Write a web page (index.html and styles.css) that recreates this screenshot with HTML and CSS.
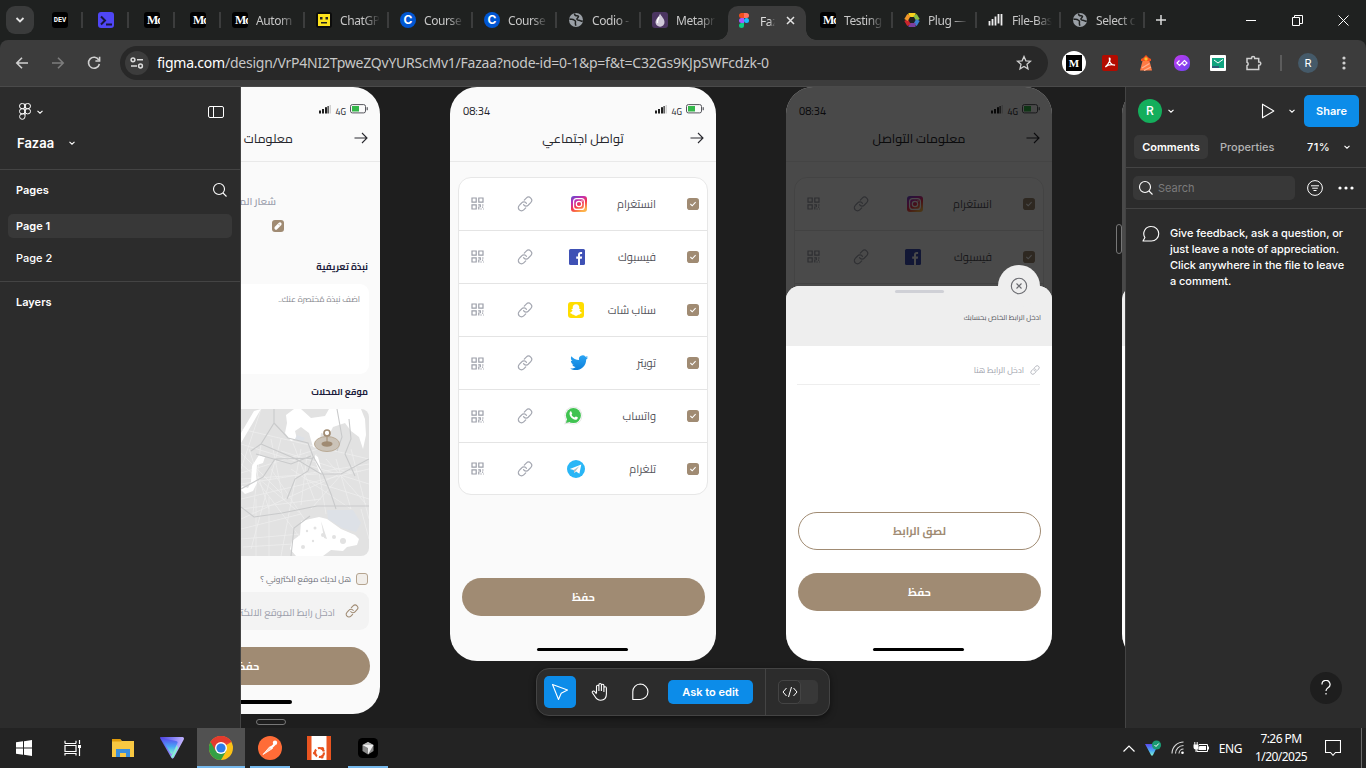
FILE: index.html
```html
<!DOCTYPE html>
<html lang="en">
<head>
<meta charset="utf-8">
<title>Fazaa</title>
<link rel="stylesheet" href="styles.css">
</head>
<body>
<svg class="defs" width="0" height="0">
  <defs>
    <linearGradient id="ig" x1="0" y1="0" x2=".6" y2="1"><stop offset="0" stop-color="#5a4bd0"/><stop offset=".35" stop-color="#c22fb0"/><stop offset=".65" stop-color="#f5364c"/><stop offset="1" stop-color="#fdb24a"/></linearGradient>
    <linearGradient id="tw" x1="0" y1="0" x2="0" y2="1"><stop offset="0" stop-color="#2aa4f4"/><stop offset="1" stop-color="#0d7fd9"/></linearGradient>
    <linearGradient id="vp" x1="0" y1="0" x2="1" y2=".3"><stop offset="0" stop-color="#4a3fd8"/><stop offset=".5" stop-color="#7f7cf5"/><stop offset="1" stop-color="#cdbcff"/></linearGradient>
    <linearGradient id="vq" x1="0" y1="0" x2="0" y2="1"><stop offset="0" stop-color="#5a48ee"/><stop offset=".55" stop-color="#4aa6f5"/><stop offset="1" stop-color="#7ff5d0"/></linearGradient>
    <linearGradient id="pu" x1="0" y1="0" x2="1" y2="1"><stop offset="0" stop-color="#c13af0"/><stop offset="1" stop-color="#6a45ee"/></linearGradient>
    <symbol id="chev" viewBox="0 0 10 10"><path d="M2.500 3.800 5 6.200l2.500-2.400" fill="none" stroke="currentColor" stroke-width="1.100"/></symbol>
    <symbol id="link" viewBox="0 0 24 24"><g fill="none" stroke="currentColor" stroke-width="1.800" stroke-linecap="round"><path d="M9.800 13a4.600 4.600 0 0 0 7.300.54l3.500-3.700a4.700 4.700 0 0 0-6.700-6.700l-3 3.100"/><path d="M14.200 11a4.600 4.600 0 0 0-7.300-.54l-3.500 3.700a4.700 4.700 0 0 0 6.700 6.700l3-3.100"/></g></symbol>
    <symbol id="qr" viewBox="0 0 13 13"><g fill="none" stroke="currentColor" stroke-width="1.200"><path d="M1 1h4.200v4.200H1zM7.800 1H12v4.200H7.800zM1 7.800h4.200V12H1z"/><path d="M7.200 7.800h2M9.300 7.300v3M11 8h1.600M7.800 9.500v3M9.400 12h1.300M11.600 9.600v1.200M12 12h.8"/></g></symbol>
    <symbol id="check" viewBox="0 0 12 12"><rect width="12" height="12" rx="2.800" fill="#a08b73"/><path d="M3.400 6 5.200 7.800l3.400-3.600" fill="none" stroke="#fff" stroke-width="1.100"/></symbol>
    <symbol id="arrow" viewBox="0 0 14 12"><path d="M.5 6h12.300M8 1l5 5-5 5" fill="none" stroke="#2a2a30" stroke-width="1.100"/></symbol>
    <symbol id="bars" viewBox="0 0 12 9"><g fill="#1e1e1e"><rect y="5.500" width="2" height="3"/><rect x="3" y="4" width="2" height="4.500"/><rect x="6" y="2.200" width="2" height="6.300"/><rect x="8.500" y="1" width="1.200" height="7.500"/></g><rect x="10.600" width="1.200" height="8.500" fill="#c9c9c9"/></symbol>
    <symbol id="batt" viewBox="0 0 18 10"><rect x=".5" y=".6" width="15" height="8.300" rx="1.800" fill="none" stroke="#55565c"/><rect x="2" y="2" width="7" height="5.500" fill="#34b84a"/><rect x="16.600" y="3.200" width="1.200" height="3" fill="#55565c"/></symbol>
    <symbol id="insta" viewBox="0 0 24 24"><rect x="4" y="4" width="16" height="16" rx="3" fill="url(#ig)"/><g fill="none" stroke="#fff" stroke-width="1.200"><rect x="6.600" y="6.600" width="10.800" height="10.800" rx="3"/><circle cx="12" cy="12" r="2.700"/></g><circle cx="15" cy="9" r=".7" fill="#fff"/></symbol>
    <symbol id="fb" viewBox="0 0 24 24"><rect x="4" y="4" width="16" height="16" rx="1.500" fill="#3f51b5"/><path d="M13 20v-6.300h-1.800v-2.200H13v-1.600c0-2 1-3 2.900-3h1.200v2.200H16c-.8 0-1 .4-1 1.100v1.300h2.100l-.3 2.200H15V20z" fill="#fff"/></symbol>
    <symbol id="snap" viewBox="0 0 24 24"><rect x="4" y="4" width="16" height="16" rx="3" fill="#fd0"/><path d="M12 6.300c2.300 0 3.300 1.600 3.300 3.300v1.300l1.500.1c-.1.900-1.100 1-1.300 1.300.4 1.300 1.300 2.100 2.500 2.500-.3 1-1.600.8-2.100 1.200-.3 1.200-1.300.4-2.100.9-.6.500-1 .9-1.800.9s-1.200-.4-1.800-.9c-.8-.5-1.800.3-2.100-.9-.5-.4-1.800-.2-2.100-1.200 1.200-.4 2.100-1.200 2.500-2.500-.2-.3-1.200-.4-1.300-1.300l1.500-.1V9.600c0-1.700 1-3.300 3.300-3.300z" fill="#fff"/></symbol>
    <symbol id="twit" viewBox="0 0 24 24"><path d="M21.200 6.200c-.7.300-1.300.5-2 .6.700-.5 1.200-1.100 1.500-1.900-.7.400-1.400.7-2.200.8a3.700 3.700 0 0 0-6.400 3.400C8.900 9 6.200 7.500 4.400 5.200c-1 1.600-.5 3.800 1.100 4.900-.6 0-1.100-.2-1.600-.4 0 1.800 1.200 3.300 2.900 3.700-.5.100-1 .2-1.600.1.500 1.400 1.800 2.500 3.400 2.500-1.500 1.200-3.500 1.800-5.400 1.500 6.500 4 16-.1 16-9.100.8-.6 1.500-1.300 2-2.200z" fill="url(#tw)"/></symbol>
    <symbol id="whats" viewBox="0 0 24 24"><circle cx="12.400" cy="11.600" r="9" fill="#e3e5e3"/><path d="M3.200 20.600 5 15.500l3.600 3.700z" fill="#e3e5e3"/><circle cx="12.400" cy="11.600" r="8.200" fill="#fff"/><circle cx="12.400" cy="11.600" r="7.500" fill="#40c351"/><path d="M5 19l1.200-4.500 3.200 3.300z" fill="#40c351"/><path d="M9.200 7.600c.8-.5 1.100-.2 1.300.3l.7 1.500c.2.500-.6 1-.7 1.300.6 1.400 1.800 2.200 3 2.700.5 0 .9-1.200 1.400-1l1.800.9c.3.200 0 1.400-.6 1.900-3.300 2.400-9.700-3.900-6.900-7.600z" fill="#fff"/></symbol>
    <symbol id="tele" viewBox="0 0 24 24"><circle cx="12" cy="12" r="9" fill="#29b6f6"/><path d="M5.800 12.100 17.300 7.500l-1.900 9.200-3.300-2.300-1.700 1.700-.6-3z" fill="#fff"/><path d="M9.700 13.100l.7 3 1.200-2 3.700-4.800z" fill="#b0bec5"/></symbol>
    <symbol id="globe" viewBox="0 0 16 16"><circle cx="8" cy="8" r="7" fill="#9aa0a6"/><path d="M1.500 7c2 .5 3.500.2 4.500 1s2 1 1.500 2.200 .2 2 .2 3.600M6.500 1.500c0 1.800 1 2.300 2.500 2.300s2 1 1 1.700-1.500 1-1 2 2.500.3 3.500 1.200 1.500.5 2-.2" fill="none" stroke="#1f2120" stroke-width="1.500"/></symbol>
    <symbol id="mag" viewBox="0 0 16 16"><circle cx="7" cy="7" r="5.500" fill="none" stroke="currentColor" stroke-width="1.100"/><path d="m11 11 3.500 3.500" stroke="currentColor" stroke-width="1.100"/></symbol>
  </defs>
</svg>

<header class="tabs">
  <div class="tabsearch"><svg width="12" height="12" viewBox="0 0 12 12"><path d="m2.500 4 3.500 3.500L9.500 4" fill="none" stroke="#e3e3e3" stroke-width="1.800"/></svg></div>
  <div class="tab slim"><i class="fav dev">DEV</i></div>
  <div class="tab slim"><i class="fav term"><svg width="16" height="16"><path d="m3 4.500 4 4-4 4M8 12.500h6" fill="none" stroke="#17163a" stroke-width="2"/></svg></i></div>
  <div class="tab slim"><i class="fav mk">Mc</i></div>
  <div class="tab slim"><i class="fav mk">Mc</i></div>
  <div class="tab"><i class="fav mk">Mc</i><span>Autom</span></div>
  <div class="tab"><i class="fav"><svg width="16" height="16"><rect width="16" height="16" fill="#0c0c0c"/><rect x="2" y="2" width="12" height="12" fill="#fce21c"/><path d="M4 5h2.500v2.500H4zM9.500 5H12v2.500H9.500zM5 10h6v1.500H5z" fill="#222"/></svg></i><span>ChatGP</span></div>
  <div class="tab"><i class="fav cr">C</i><span>Course</span></div>
  <div class="tab"><i class="fav cr">C</i><span>Course</span></div>
  <div class="tab"><i class="fav"><svg width="16" height="16"><use href="#globe"/></svg></i><span>Codio -</span></div>
  <div class="tab last"><i class="fav"><svg width="16" height="16"><rect width="16" height="16" fill="#4b3561"/><path d="M8 1.500c1 2.500 4.500 5 4.500 8.500a4.500 4.500 0 0 1-9 .5C3.500 7 7 5 8 1.500z" fill="#cfc8d8"/><path d="M7 5c-1 2-2 3.500-1.500 6" stroke="#fff" fill="none" stroke-width="1.500"/></svg></i><span>Metapr</span></div>
  <div class="tab active"><svg width="10" height="15" viewBox="0 0 10 15"><path d="M2.500 0H5v5H2.500a2.500 2.500 0 0 1 0-5z" fill="#f24e1e"/><path d="M5 0h2.500a2.500 2.500 0 0 1 0 5H5z" fill="#ff7262"/><path d="M2.500 5H5v5H2.500a2.500 2.500 0 0 1 0-5z" fill="#a259ff"/><circle cx="7.500" cy="7.500" r="2.500" fill="#1abcfe"/><path d="M2.500 10H5v2.500A2.500 2.500 0 1 1 2.500 10z" fill="#0acf83"/></svg><span>Faz</span><svg class="x" width="9" height="9"><path d="m1 1 7 7M8 1 1 8" stroke="#e3e3e3" stroke-width="1.500"/></svg></div>
  <div class="tab"><i class="fav mk">Mc</i><span>Testing</span></div>
  <div class="tab"><i class="fav"><svg width="16" height="16"><g fill="none" stroke-width="4"><path d="M4.500 3h7" stroke="#f7d21c"/><path d="M11 3l3 5" stroke="#8ac043"/><path d="M14 8l-3 5" stroke="#3d7fd0"/><path d="M11.500 13h-7" stroke="#7a3fa0"/><path d="M5 13 2 8" stroke="#c9252d"/><path d="m2 8 3-5" stroke="#f0962a"/></g></svg></i><span>Plug —</span></div>
  <div class="tab"><i class="fav"><svg width="16" height="16"><path d="M1.500 9v4.500M4.500 7v6.500M7.500 4.500v9M10.500 2v9.500M13.500 2v11.500" stroke="#eee" stroke-width="1.800"/></svg></i><span>File-Bas</span></div>
  <div class="tab"><i class="fav"><svg width="16" height="16"><use href="#globe"/></svg></i><span>Select c</span></div>
  <svg class="plus" width="12" height="12"><path d="M6 1v10M1 6h10" stroke="#dadada" stroke-width="1.500"/></svg>
  <div class="winctl">
    <svg width="11" height="11"><path d="M0 5.500h10" stroke="#fff"/></svg>
    <svg width="11" height="11"><path d="M.5 2.500h7v8h-7zM2.500 2.500v-2h8v8h-3" fill="none" stroke="#fff"/></svg>
    <svg width="11" height="11"><path d="m.5.5 10 10M10.500.5l-10 10" stroke="#fff"/></svg>
  </div>
</header>

<div class="barwrap"><nav class="bar">
  <svg class="nv" width="16" height="16"><path d="M14 8H3M8 2.800 2.800 8 8 13.200" fill="none" stroke="#d0d0d0" stroke-width="1.600"/></svg>
  <svg class="nv" width="16" height="16"><path d="M2 8h11M8 2.800 13.200 8 8 13.200" fill="none" stroke="#7d7d7d" stroke-width="1.600"/></svg>
  <svg class="nv" width="16" height="16"><path d="M12.800 5A5.500 5.500 0 1 0 13.400 9" fill="none" stroke="#d0d0d0" stroke-width="1.600"/><path d="M13.600 1.800V6H9.400" fill="none" stroke="#d0d0d0" stroke-width="1.600"/></svg>
  <div class="omni">
    <i class="site"><svg width="14" height="12" viewBox="0 0 14 12"><g fill="none" stroke="#dcdcdc" stroke-width="1.500"><circle cx="3" cy="2.800" r="1.900"/><path d="M7 2.800h6M1 9h6"/><circle cx="10.500" cy="9" r="1.900"/></g></svg></i>
    <div class="url"><b>figma.com</b>/design/VrP4NI2TpweZQvYURScMv1/Fazaa?node-id=0-1&amp;p=f&amp;t=C32Gs9KJpSWFcdzk-0</div>
    <svg width="16" height="16"><path d="m8 1.500 1.900 4.300 4.600.4-3.500 3.100 1 4.600L8 11.500l-4 2.400 1-4.600L1.500 6.200l4.600-.4z" fill="none" stroke="#d0d0d0" stroke-width="1.300"/></svg>
  </div>
  <div class="ext">
    <i class="med">M</i>
    <svg width="16" height="16"><rect width="16" height="16" rx="2" fill="#b30b00"/><path d="M7.300 3c2 0 .3 5-4 9 2.500-2.200 6-2.800 9.700-1.800-3 .3-6.200-3-5.700-7.200z" fill="none" stroke="#fff" stroke-width="1.200"/></svg>
    <svg width="16" height="16"><path d="M3 6V4l2-1 3-3 3 3 2 1v2z" fill="#f4511e"/><path d="M4.500 6h7l2.500 9.500H2z" fill="#ff7a45"/><circle cx="8" cy="4" r="1.700" fill="#ffc02e"/><path d="m4 13 7.500-4.500M6 15.500l7-3.500" stroke="#ffb190" stroke-width="1.300"/></svg>
    <svg width="16" height="16"><rect width="16" height="16" rx="7" fill="url(#pu)"/><path d="M5.500 5.500 3 8l2.500 2.500L10.500 5.500 13 8l-2.500 2.500L8.500 8.500" fill="none" stroke="#fff" stroke-width="1.200"/></svg>
    <svg width="16" height="16"><rect width="16" height="16" rx="1" fill="#fff"/><rect x="2" y="3" width="12" height="10" fill="#10a37f"/><path d="m4 5 4 3 5-3.500" fill="none" stroke="#fff"/><path d="M2 11h7v2H2z" fill="#2d5b77"/></svg>
    <svg width="18" height="18"><path d="M2 4.500h4.500V4a1.600 1.600 0 0 1 3.200 0v.5h4V8h.5a1.600 1.600 0 0 1 0 3.200h-.5v4.300H2v-3.800a1.800 1.800 0 0 0 0-3.400z" fill="none" stroke="#d0d0d0" stroke-width="1.500"/></svg>
    <i class="vsep"></i>
    <i class="me">R</i>
    <svg width="4" height="16"><g fill="#d0d0d0"><circle cx="2" cy="3" r="1.600"/><circle cx="2" cy="8" r="1.600"/><circle cx="2" cy="13" r="1.600"/></g></svg>
  </div>
</nav></div>

<main>
  <aside class="left">
    <div class="ltop">
      <svg class="flogo" width="12" height="17" viewBox="0 0 12 17"><g fill="none" stroke="#fff"><rect x=".5" y=".5" width="5.500" height="5.200" rx="2.600"/><rect x="6" y=".5" width="5.500" height="5.200" rx="2.600"/><rect x=".5" y="5.700" width="5.500" height="5.200" rx="2.600"/><rect x="6" y="5.700" width="5.500" height="5.200" rx="2.600"/><path d="M6 10.900v2.700a2.700 2.700 0 1 1-2.700-2.700zM6 .5v11"/></g></svg>
      <svg class="cv" width="10" height="10"><use href="#chev"/></svg>
      <svg class="panel" width="16" height="12"><rect x=".5" y=".5" width="15" height="11" rx="1.500" fill="none" stroke="#fff"/><path d="M5.500 0v12" stroke="#fff"/></svg>
    </div>
    <div class="fname">Fazaa <svg width="10" height="10"><use href="#chev"/></svg></div>
    <section class="pages">
      <div class="ph">Pages <svg width="16" height="16"><use href="#mag"/></svg></div>
      <div class="pg on">Page 1</div>
      <div class="pg">Page 2</div>
    </section>
    <div class="ph layers">Layers</div>
  </aside>

  <div class="canvas">
    <article class="phone p1">
      <div class="status"><span class="time"></span><svg width="12" height="9"><use href="#bars"/></svg><small>4G</small><svg width="18" height="10"><use href="#batt"/></svg></div>
      <div class="head"><h2 dir="rtl">معلومات المتجر</h2><svg width="14" height="12"><use href="#arrow"/></svg></div>
      <div class="form" dir="rtl">
        <p class="logo">شعار المتجر</p>
        <svg class="pen" width="12" height="12"><rect width="12" height="12" rx="3" fill="#a08b73"/><path d="m4 8 4-4" stroke="#fff" stroke-width="3.200" stroke-linecap="round"/><path d="m6.500 4 1.600 1.600" stroke="#a08b73" stroke-width=".6"/></svg>
        <h3 class="a">نبذة تعريفية</h3>
        <div class="area">اضف نبذة مُختصرة عنك..</div>
        <h3 class="b">موقع المحلات</h3>
        <svg class="map" width="250" height="147" viewBox="-122 0 250 147">
          <rect x="-122" width="250" height="147" fill="#e2e2e2"/>
          <g stroke="#eeeeee" stroke-width=".8" fill="none"><path d="M0 20l128 30M0 35l128 40M0 55l60 50M0 75l128-20M0 90l128-30M0 110l110-50M20 0l-20 60M40 30l-30 110M60 40L40 147M75 45l10 60M95 50l15 50M110 40l18 70M0 100l80-10M0 120l60-15M0 130l60-5M15 70l45 60M30 60l40 60M50 60l60 40M85 50l40 45M15 90v57M28 88v59M120 100l8 30"/><path d="M0 64l90-28M0 70l120-8M40 42l70 22M30 30l12 60M52 34l22 58M66 46l-6 50M100 66l-30 34M2 138l50-3M8 40l20 60M20 34l-8 70M64 70l64 20M0 44l40 40"/></g>
          <path d="M0 24 13 2 20 0 7 22 0 34zM45 6l8-6h7l10 9 14-2 4-7h32l4 10 1 16-3 14-4-12-8-6-6-8-12 4-4 8-8-2-2 16-6-2-4-14-8-6-6 4 2 8-6 2-6-8 2-10zM18 46l6 2-2 6-6 2-1 12 1 6-4 8-8 3-4-4 1-4 6 2 3-6 1-16zM74 46l3 2 4 15-2 1-5-12zM60 112l18-4 8 2 14 10 14 6 4 4-2 6-10 2-4 4-12-1-8 6H55l-6-7 2-8 8-6z" fill="#fff"/>
          <path d="m56 26 8 3-3 4-7-3zM86 101h26l8 13-5 9-14-4-14-9z" fill="#dde1e7"/>
          <g fill="none" stroke="#c9cacb" stroke-width="1.100"><path d="M33 0v14L20 35l-10 7M33 14l14 15 20 5 5 13 10 18 8 20 5 15M0 98l13 10 28-4 35-7h52M20 35l35 15 25 15h20l28-15M0 80l22-12 12-18 38-1M72 48l-5 14-13 8-8 20M108 10l2 20-6 15 10 22M96 0l5 28-5 14M15 45l35 10 20-8M50 147l3-28 16-12"/></g>
          <g fill="#e2e2e2"><circle cx="66" cy="122" r="1.200"/><circle cx="74" cy="119" r="1.500"/><circle cx="82" cy="126" r="2"/><circle cx="93" cy="128" r="2"/><circle cx="102" cy="132" r="3"/><circle cx="72" cy="132" r="1.200"/><circle cx="62" cy="138" r="2"/><path d="m80 112 6 18-3-1z"/></g>
          <ellipse cx="86" cy="35" rx="12.500" ry="7.500" fill="#cbc3b8" stroke="#b9a994"/><ellipse cx="86" cy="35" rx="5.500" ry="2.700" fill="#a08b73"/><path d="M86 28v7" stroke="#a08b73" stroke-width="1"/><circle cx="86" cy="24" r="3" fill="#fff" stroke="#a08b73" stroke-width="1.700"/>
        </svg>
        <div class="ask"><i></i><span>هل لديك موقع الكتروني ؟</span></div>
        <div class="site-in"><svg width="14" height="14"><use href="#link"/></svg><span>ادخل رابط الموقع الالكتروني</span></div>
        <div class="save"><span>حفظ</span></div>
        <div class="home"></div>
      </div>
    </article>

    <article class="phone p2">
      <div class="status"><span class="time">08:34</span><svg width="12" height="9"><use href="#bars"/></svg><small>4G</small><svg width="18" height="10"><use href="#batt"/></svg></div>
      <div class="head"><h2 dir="rtl">تواصل اجتماعي</h2><svg width="14" height="12"><use href="#arrow"/></svg></div>
      <div class="list">
        <div class="row"><svg class="q"><use href="#qr"/></svg><svg class="l"><use href="#link"/></svg><svg class="br"><use href="#insta"/></svg><span>انستغرام</span><svg class="c"><use href="#check"/></svg></div>
        <div class="row fbk"><svg class="q"><use href="#qr"/></svg><svg class="l"><use href="#link"/></svg><svg class="br"><use href="#fb"/></svg><span>فيسبوك</span><svg class="c"><use href="#check"/></svg></div>
        <div class="row snp"><svg class="q"><use href="#qr"/></svg><svg class="l"><use href="#link"/></svg><svg class="br"><use href="#snap"/></svg><span>سناب شات</span><svg class="c"><use href="#check"/></svg></div>
        <div class="row"><svg class="q"><use href="#qr"/></svg><svg class="l"><use href="#link"/></svg><svg class="br"><use href="#twit"/></svg><span>تويتر</span><svg class="c"><use href="#check"/></svg></div>
        <div class="row wts"><svg class="q"><use href="#qr"/></svg><svg class="l"><use href="#link"/></svg><svg class="br"><use href="#whats"/></svg><span>واتساب</span><svg class="c"><use href="#check"/></svg></div>
        <div class="row snp"><svg class="q"><use href="#qr"/></svg><svg class="l"><use href="#link"/></svg><svg class="br"><use href="#tele"/></svg><span>تلغرام</span><svg class="c"><use href="#check"/></svg></div>
      </div>
      <div class="foot"><div class="save"><span>حفظ</span></div><div class="home"></div></div>
    </article>

    <article class="phone p3">
      <div class="status"><span class="time">08:34</span><svg width="12" height="9"><use href="#bars"/></svg><small>4G</small><svg width="18" height="10"><use href="#batt"/></svg></div>
      <div class="head"><h2 dir="rtl">معلومات التواصل</h2><svg width="14" height="12"><use href="#arrow"/></svg></div>
      <div class="list">
        <div class="row"><svg class="q"><use href="#qr"/></svg><svg class="l"><use href="#link"/></svg><svg class="br"><use href="#insta"/></svg><span>انستغرام</span><svg class="c"><use href="#check"/></svg></div>
        <div class="row fbk"><svg class="q"><use href="#qr"/></svg><svg class="l"><use href="#link"/></svg><svg class="br"><use href="#fb"/></svg><span>فيسبوك</span><svg class="c"><use href="#check"/></svg></div>
        <div class="row"></div>
      </div>
      <div class="shade"></div>
      <div class="sheet">
        <div class="bump"><svg width="18" height="18"><circle cx="9" cy="9" r="7.700" fill="none" stroke="#6a6b70" stroke-width="1.100"/><path d="m6.500 6.500 5 5M11.500 6.500l-5 5" stroke="#6a6b70" stroke-width="1.100"/></svg></div>
        <div class="shead"><i></i><p dir="rtl">ادخل الرابط الخاص بحسابك</p></div>
        <div class="sin" dir="rtl"><svg width="10" height="10"><use href="#link"/></svg><span>ادخل الرابط هنا</span></div>
        <div class="foot"><div class="save ghost"><span>لصق الرابط</span></div><div class="save"><span>حفظ</span></div><div class="home"></div></div>
      </div>
    </article>

    <article class="phone p4"><div class="shade"></div><div class="sheet"><div class="shead"></div></div></article>
    <i class="vscroll"></i><i class="hscroll"></i>

    <div class="tools">
      <i class="tool on"><svg width="18" height="18"><path d="M1.500 1.500 16.500 7l-6.300 3.200L7.500 16.500z" fill="none" stroke="#fff" stroke-width="1.100" stroke-linejoin="round"/></svg></i>
      <i class="tool"><svg width="20" height="20" viewBox="0 0 20 20"><path d="M6.500 11V4.500a1.200 1.200 0 0 1 2.400 0V9M8.900 9V2.800a1.200 1.200 0 0 1 2.500 0V9M11.400 9V3.500a1.200 1.200 0 0 1 2.500 0V10M13.900 10V6a1.200 1.200 0 0 1 2.500 0v6c0 4-2.500 6.200-5.700 6.200-3.200 0-4.500-1.500-5.700-3.700L2.400 10.700c-.7-1.300 1.300-2.400 2.300-1.200L6.500 12" fill="none" stroke="#fff" stroke-width="1.100"/></svg></i>
      <i class="tool"><svg width="18" height="18"><path d="M9.200 1a7.600 7.600 0 1 1 0 15.500H1.800V8.700A7.500 7.500 0 0 1 9.200 1z" fill="none" stroke="#fff" stroke-width="1.100" stroke-linejoin="round"/></svg></i>
      <b class="ask-edit">Ask to edit</b>
      <div class="dev"><div class="switch"><i><svg width="16" height="12"><path d="M4.500 2 1 6l3.500 4M11.500 2 15 6l-3.500 4M9.500 1l-3 10" fill="none" stroke="#fff"/></svg></i></div></div>
    </div>
  </div>

  <aside class="right">
    <div class="rtop"><i class="av">R</i><svg width="10" height="10"><use href="#chev"/></svg><svg class="play" width="14" height="16"><path d="M1.500 1.200v13.600L12.800 8z" fill="none" stroke="#fff" stroke-width="1.100" stroke-linejoin="round"/></svg><svg width="10" height="10"><use href="#chev"/></svg><b>Share</b></div>
    <div class="rtabs"><b>Comments</b><span>Properties</span><em>71%</em><svg width="10" height="10"><use href="#chev"/></svg></div>
    <div class="rsearch"><div class="sbox"><svg width="16" height="16"><use href="#mag"/></svg>Search</div><svg class="filt" width="16" height="16" viewBox="0 0 16 16"><g fill="none" stroke="#fff" stroke-width="1"><circle cx="8" cy="8" r="7.400"/><path d="M4 5.800h8M5.200 8.200h5.600M6.500 10.500h3"/></g></svg><svg width="16" height="4"><g fill="#fff"><circle cx="2" cy="2" r="1.600"/><circle cx="8" cy="2" r="1.600"/><circle cx="14" cy="2" r="1.600"/></g></svg></div>
    <div class="note"><svg width="18" height="18"><path d="M9.500 1.500a7 7 0 1 1 0 14.500H1l1.900-3.500A7.200 7.200 0 0 1 9.500 1.500z" fill="none" stroke="#fff" stroke-width="1.100" stroke-linejoin="round"/></svg><p>Give feedback, ask a question, or<br>just leave a note of appreciation.<br>Click anywhere in the file to leave<br>a comment.</p></div>
    <i class="help"><svg width="10" height="16"><path d="M1 4.500a4 4 0 1 1 6 3.300C5.500 8.800 5 9.300 5 11M5 13v1.500" fill="none" stroke="#fff" stroke-width="1.200"/></svg></i>
  </aside>
</main>

<footer class="task">
  <i><svg width="16" height="16"><path d="M0 2.300 7 1.300v6.300H0zM8 1.200 16 0v7.600H8zM0 8.500h7v6.300l-7-1zM8 8.500h8V16l-8-1.200z" fill="#fff"/></svg></i>
  <i><svg width="17" height="16"><path d="M1 3.500V.8M12 3.500V.8M1 3.500h11M1 5.500h11v6H1zM1 13.500h11M1 13v2.500M12 13v2.500M15.500 0v4M15.500 8v8" fill="none" stroke="#fff" stroke-width="1.200"/><path d="M14 5h3v3h-3z" fill="#fff"/></svg></i>
  <i class="ex"><svg width="22" height="18"><path d="M0 0h8l2 2h12v16H0z" fill="#f8c842"/><path d="M0 0h8l1.500 2.500H0z" fill="#e09b0a"/><path d="M4 18v-8h14v8h-4v-4H8v4z" fill="#3a8edb"/></svg></i>
  <i><svg width="24" height="22"><path d="M0 0h21c3 0 3.500 1 2.500 3L14 20.500c-1 1.500-2 1.500-2.800 0L.5 2z" fill="url(#vp)"/><path d="M.3 1 16 4c2 .5 2 1.500 1 3l-4.500 9c-.5 1-1 1-1.500.5z" fill="url(#vq)"/><path d="m11 20 6-12 1 3-5 10z" fill="#82f5d3"/></svg></i>
  <i class="cur run"><svg width="24" height="24" viewBox="0 0 24 24"><circle cx="12" cy="12" r="12" fill="#fbc116"/><path d="M12 12 1.600 6A12 12 0 0 1 22.400 6z" fill="#ea4335"/><path d="M1.600 6A12 12 0 0 0 12 24l5.200-9z" fill="#34a044"/><path d="M12 6h10.400A12 12 0 0 0 1.600 6l5.200 9z" fill="#e33b2e"/><circle cx="12" cy="12" r="6" fill="#fff"/><circle cx="12" cy="12" r="4.600" fill="#2f7de9"/></svg></i>
  <i class="run"><svg width="24" height="24"><circle cx="12" cy="12" r="12" fill="#ff6c37"/><path d="m5 18.500 7-8 2.500 2z" fill="#ffd9c9" stroke="#fff" stroke-width=".8"/><path d="m11.500 11.500 4.500-4 1.500 1.500-4 4z" fill="#fff"/><circle cx="17" cy="6.800" r="2.200" fill="#fff"/></svg></i>
  <i><svg width="24" height="24"><path d="M0 0h24v24H0z" fill="#e95420"/><path d="M4.500 0h15v24h-15z" fill="#fff"/><circle cx="12.500" cy="16.500" r="4.500" fill="none" stroke="#e95420" stroke-width="2.200" stroke-dasharray="7.500 2"/><g fill="#e95420"><circle cx="7.500" cy="17" r="1.600"/><circle cx="15.500" cy="12.500" r="1.600"/><circle cx="15" cy="21" r="1.600"/></g></svg></i>
  <i class="run"><svg width="20" height="20"><rect width="20" height="20" rx="4.500" fill="#000"/><path d="m10 4 5.500 3v6L10 16.500 4.500 13V7z" fill="#888"/><path d="M4.500 7H15.500L10 16.500V10z" fill="#eee"/><path d="M4.500 7 10 4l5.500 3z" fill="#bbb"/></svg></i>
  <div class="tray">
    <svg width="12" height="7"><path d="M.5 6.500 6 1l5.500 5.500" fill="none" stroke="#fff" stroke-width="1.200"/></svg>
    <svg class="shield" width="17" height="17"><path d="M0 4h11c2 0 2 1 1.500 2L8 15c-.5 1-1.500 1-2 0z" fill="url(#vq)"/><circle cx="11.500" cy="5" r="4.600" fill="#1b9a74"/><path d="m9.500 5 1.500 1.500 2.800-3" fill="none" stroke="#fff"/></svg>
    <svg class="wifi" width="14" height="14"><g fill="none" stroke="#ddd" stroke-width="1.100"><path d="M1 12.500A11.500 11.500 0 0 1 12.500 1M4.500 12.500a8 8 0 0 1 8-8M8 12.500A4.500 4.500 0 0 1 12.500 8"/></g><circle cx="11.500" cy="11.700" r="1.300" fill="#fff"/></svg>
    <svg width="16" height="12"><path d="M6 2.500h8.500v7H4V7" fill="none" stroke="#fff"/><path d="M6.500 4H13v4H5.500V6zM15 4.500h1v3h-1zM.5 2.500H5.500V5a2.500 2.500 0 0 1-5 0z" fill="#fff"/><path d="M1.800 0v3M4.200 0v3M3 6v4" stroke="#fff"/></svg>
    <span class="eng">ENG</span>
    <div class="clock">7:26 PM<br>1/20/2025</div>
    <svg width="16" height="16"><path d="M.5.500h15v12h-5L8 15.300 5.500 12.500h-5z" fill="none" stroke="#fff" stroke-width="1.100"/></svg>
  </div>
</footer>
</body>
</html>
```
FILE: styles.css
```css
* { box-sizing: border-box; margin: 0; padding: 0; }
body { width: 1366px; height: 768px; overflow: hidden; background: #1e1e1e; display: flex; flex-direction: column; font-family: Inter, sans-serif; font-size: 11px; color: #fff; }
i, em { font-style: normal; }
svg { display: block; flex: none; }
.defs { position: absolute; }

/* browser tabs */
.tabs { height: 40px; background: #1f2120; display: flex; align-items: center; font: 12px "Noto Sans", sans-serif; color: #c7c7c7; }
.tabsearch { width: 28px; height: 28px; margin: 0 3px 0 6px; border-radius: 9px; background: #3a3b3b; display: grid; place-items: center; }
.tab { width: 84px; height: 16px; padding-left: 11px; border-right: 2px solid #3c3d3d; display: flex; align-items: center; gap: 8px; flex: none; }
.tab span { width: 40px; overflow: hidden; white-space: nowrap; letter-spacing: -.4px; line-height: 18px; padding-top: 2px; -webkit-mask-image: linear-gradient(90deg, #000 60%, transparent); mask-image: linear-gradient(90deg, #000 60%, transparent); }
.tab.slim { width: 46px; padding-left: 15px; }
.tab.last { border-color: transparent; }
.fav { width: 16px; height: 16px; border-radius: 3px; overflow: hidden; flex: none; display: grid; place-items: center; line-height: 16px; }
.fav.dev { background: #000; color: #fff; font: bold 7px/16px "Liberation Mono", monospace; }
.fav.term { background: #4f46f5; }
.fav.mk { background: #000; color: #fff; font: bold 12px/16px "Liberation Serif", serif; letter-spacing: -1px; place-items: center start; padding-left: 3px; }
.fav.cr { background: #0056d2; border-radius: 50%; color: #fff; font: bold 12px/16px Inter, sans-serif; }
.tab.active { position: relative; width: 78px; height: 34px; align-self: flex-end; background: #3c3c3c; border: 0; border-radius: 10px 10px 0 0; margin: 0 3px; color: #dedede; gap: 11px; }
.tab.active::before, .tab.active::after { content: ""; position: absolute; bottom: 0; width: 10px; height: 10px; }
.tab.active::before { left: -10px; background: radial-gradient(circle at 0 0, transparent 9.500px, #3c3c3c 10px); }
.tab.active::after { right: -10px; background: radial-gradient(circle at 100% 0, transparent 9.500px, #3c3c3c 10px); }
.tab.active svg, .tab.active span { margin-top: -5px; }
.tab.active span { width: 15px; }
.plus { margin-left: 10px; }
.winctl { margin-left: auto; display: flex; gap: 35px; padding-right: 17px; }

/* address bar */
.barwrap { background: #1f2120; height: 47px; flex: none; }
.bar { height: 47px; background: #3c3c3c; border-bottom: 1px solid #4a4a4a; border-radius: 8px 8px 0 0; display: flex; align-items: center; padding: 0 4px 0 14px; }
.nv { margin-right: 20px; }
.omni { margin-left: -2px; width: 928px; height: 34px; border-radius: 17px; background: #282828; display: flex; align-items: center; padding: 0 16px 0 5px; flex: none; }
.site { width: 24px; height: 24px; border-radius: 50%; background: #3c3c3c; display: grid; place-items: center; }
.url { flex: 1; margin: -1px 0 0 8px; font: 14px "Noto Sans", sans-serif; color: #c7c7c7; letter-spacing: -.235px; white-space: nowrap; }
.url b { font-weight: 400; color: #fff; }
.ext { margin-left: 8px; display: grid; grid-template-columns: repeat(6, 36px) 18px 36px 36px; align-items: center; justify-items: center; }
.med { width: 24px; height: 24px; border-radius: 50%; background: linear-gradient(#000, #000) center / 16px 16px no-repeat #fff; font: bold 11px/24px "Liberation Serif", serif; text-align: center; }
.vsep { width: 2px; height: 16px; background: #5c5c5c; }
.me { width: 20px; height: 20px; border-radius: 50%; background: #455a69; text-align: center; line-height: 20px; }

/* editor */
main { flex: 1; display: flex; min-height: 0; }
.left { width: 241px; background: #2c2c2c; border-right: 1px solid #444; font-weight: 600; }
.ltop { display: flex; align-items: center; padding: 16px 16px 0 19px; height: 33px; }
.cv { margin-left: 4px; }
.panel { margin-left: auto; }
.fname { height: 50px; border-bottom: 1px solid #444; padding: 15px 0 0 17px; font-size: 13px; display: flex; line-height: 17px; gap: 13px; }
.fname svg { margin-top: 3px; }
.pages { border-bottom: 1px solid #444; padding: 4px 8px 11px; height: 112px; }
.ph { height: 32px; line-height: 33px; padding: 0 4px 0 8px; display: flex; justify-content: space-between; align-items: center; }
.pg { height: 24px; line-height: 24px; padding-left: 8px; border-radius: 5px; font-weight: 500; margin-bottom: 8px; }
.pg.on { background: #383838; margin-top: 8px; font-weight: 600; }
.layers { padding-left: 16px; margin-top: 4px; }

.canvas { flex: 1; position: relative; overflow: hidden; background: #1e1e1e; }
.phone { position: absolute; top: 0; width: 266px; height: 574px; border-radius: 27px; background: #fafafa; overflow: hidden; color: #26262c; display: flex; flex-direction: column; font-family: Cairo, "Noto Sans Arabic", "DejaVu Sans", sans-serif; }
.p1 { left: -127px; height: 627px; }
.p2 { left: 209px; }
.p3 { left: 545px; }
.p4 { left: 881px; }
.status { height: 41px; padding: 6px 12px 0 13px; display: flex; align-items: center; flex: none; }
.time { flex: 1; font-size: 11px; line-height: 14px; padding-top: 1px; }
.status small { font-size: 9px; line-height: 10px; margin: 2px 4px 0; }
.status svg { margin-top: -3px; }
.head { height: 34px; border-bottom: 1px solid #e9e9e9; padding: 4px 12px 0; display: grid; grid-template-columns: 14px 1fr 14px; flex: none; }
.head h2 { grid-column: 2; font-weight: 400; font-size: 12.700px; text-align: center; line-height: 13px; white-space: nowrap; }
.list { margin: 14.500px 8px 0; border: 1.500px solid #e7e7e7; border-radius: 13px; background: #fff; flex: none; }
.row { height: 53.200px; border-bottom: 1.500px solid #e4e4e4; display: grid; grid-template-columns: 46px 16px 34px 24px 1fr 31px 11px; align-items: center; padding: 0 9px 0 12px; color: #55555c; }
.row:last-child { border-bottom: 0; height: 51px; }
.q { width: 13px; height: 13px; color: #9b9ea8; }
.l { width: 16px; height: 16px; color: #a4a7b1; }
.br { grid-column: 4; width: 24px; height: 24px; }
.fbk .br { margin-left: -2px; }
.snp .br { margin-left: -3px; }
.wts .br { margin-left: -6px; }
.row span { grid-column: 5; text-align: right; direction: rtl; font-size: 11.100px; white-space: nowrap; }
.c { grid-column: 7; width: 12px; height: 12px; }
.foot { margin-top: auto; padding: 0 11px 10px 12px; }
.save { height: 38px; border-radius: 19px; background: #a08b73; color: #fff; font-weight: 700; font-size: 11px; display: grid; place-items: center; }
.home { width: 91px; height: 3.500px; border-radius: 2px; background: #000; margin: 31.500px auto 0; transform: translateX(-1px); }

.p1 .head h2 { direction: rtl; text-align: right; padding-right: 61px; }
.form { display: flex; flex-direction: column; align-items: flex-start; padding: 0 11px 0 10px; }
.logo { color: #9a9eac; font-size: 10.300px; font-weight: 600; line-height: 16px; margin: 32px 93px 0 0; }
.pen { margin: 10px 85px 0 0; }
.form h3 { font-size: 9.300px; line-height: 14px; color: #1b1b3a; margin-right: 1px; }
.form h3.a { margin-top: 28px; }
.form h3.b { margin-top: 11px; font-size: 9px; }
.area { width: 244px; height: 90px; margin-top: 10px; background: #fff; border-radius: 9px; padding: 9px 9px; font-size: 8.300px; color: #84858c; line-height: 12px; }
.map { margin-top: 10px; border-radius: 8px; }
.ask { margin: 17px 1px 0 0; display: flex; align-items: center; gap: 5px; font-size: 8.500px; color: #6c6e78; height: 12px; }
.ask i { width: 12px; height: 12px; border: 1px solid #b5a48f; border-radius: 3px; background: #f1eeea; }
.site-in { width: 244px; height: 38px; margin-top: 7px; background: #f3f3f3; border-radius: 9px; display: flex; align-items: center; gap: 10px; padding: 0 10px 0 0; color: #9b9daa; font-size: 10px; white-space: nowrap; }
.site-in span { padding-top: 3px; }
.site-in svg { color: #a08b73; }
.form .save { width: 244px; margin: 17px -1px 0 0; }
.form .home { margin: 15px 77px 0 0; transform: none; }

.shade { position: absolute; inset: 0; background: rgba(0, 0, 0, .71); }
.sheet { position: absolute; left: 0; right: 0; top: 199px; bottom: 0; background: #fff; border-radius: 14px 14px 0 0; display: flex; flex-direction: column; }
.bump { position: absolute; right: 12px; top: -21px; width: 42px; height: 42px; border-radius: 50%; background: #eee; display: grid; place-items: center; }
.shead { height: 60px; background: #eee; border-radius: 14px 14px 0 0; flex: none; padding: 4px 11px; }
.shead i { display: block; width: 49px; height: 3px; border-radius: 2px; background: #cfd0d6; margin: 0 auto; }
.shead p { margin-top: 19px; font-size: 7.300px; line-height: 10px; color: #55565e; }
.sin { margin: 0 12px 0 11px; height: 39px; padding-top: 10px; border-bottom: 1px solid #eee; display: flex; align-items: center; gap: 6px; color: #a0a2ac; font-size: 8.400px; }
.ghost { background: #fff; border: 1px solid #a08b73; color: #a08b73; margin-bottom: 23px; }
.sheet .home { margin-top: 37px; }
.vscroll { position: absolute; left: 875px; top: 137px; width: 6px; height: 30px; border: 1px solid #777; border-radius: 3px; background: #1e1e1e; }
.hscroll { position: absolute; left: 15px; top: 632px; width: 30px; height: 6px; border: 1px solid #777; border-radius: 3px; }

.tools { position: absolute; left: 295px; top: 581px; width: 294px; height: 48px; background: #2c2c2c; border: 1px solid #444; border-radius: 13px; display: flex; align-items: center; padding-left: 7px; box-shadow: 0 2px 6px rgba(0, 0, 0, .5); }
.tool { width: 32px; height: 32px; margin-right: 8px; display: grid; place-items: center; border-radius: 5px; }
.tool.on { background: #0c8ce9; }
.ask-edit { width: 85px; height: 24px; margin-left: 4px; border-radius: 5px; background: #0c8ce9; text-align: center; line-height: 24px; font-weight: 600; }
.tools .dev { margin-left: 12px; border-left: 1px solid #444; height: 46px; padding: 11px 0 0 12px; }
.switch { width: 40px; height: 24px; border-radius: 5px; background: #383838; }
.switch i { width: 23px; height: 24px; border: 1px solid #444; border-radius: 5px; background: #2c2c2c; display: grid; place-items: center; }

.right { width: 241px; background: #2c2c2c; border-left: 1px solid #444; position: relative; }
.rtop { height: 48px; display: flex; align-items: center; padding: 0 7px 0 12px; }
.av { width: 24px; height: 24px; border-radius: 50%; background: #14ae5c; text-align: center; line-height: 24px; margin-right: 4px; font-size: 12px; font-weight: 500; }
.play { margin: 0 12px 0 auto; }
.rtop b { width: 55px; height: 32px; margin-left: 7px; border-radius: 5px; background: #0c8ce9; text-align: center; line-height: 32px; font-weight: 600; }
.rtabs { height: 33px; border-bottom: 1px solid #444; display: flex; align-items: center; padding: 0 14px 9px 8px; }
.rtabs b { width: 74px; height: 24px; border-radius: 5px; background: #383838; text-align: center; line-height: 24px; font-weight: 600; }
.rtabs span { color: #b3b3b3; font-weight: 500; margin-left: 12px; }
.rtabs em { margin: 0 12px 0 auto; font-weight: 500; letter-spacing: .4px; }
.rsearch { height: 41px; border-bottom: 1px solid #444; display: flex; align-items: center; padding: 0 12px 0 7px; }
.sbox { width: 162px; height: 24px; border-radius: 5px; background: #383838; color: #7b7b7b; display: flex; align-items: center; gap: 4px; padding-left: 5px; }
.sbox svg { color: #fff; }
.filt { margin: 0 15px 0 12px; }
.note { display: flex; gap: 10px; padding: 16px 0 0 16px; line-height: 16px; font-weight: 500; letter-spacing: -.06px; }
.help { position: absolute; right: 24px; bottom: 24px; width: 32px; height: 32px; border-radius: 50%; background: #1e1e1e; display: grid; place-items: center; }

/* taskbar */
.task { height: 40px; background: #232323; display: flex; flex: none; font: 12px "Noto Sans", sans-serif; }
.task > i { width: 48px; display: grid; place-items: center; margin-right: 1px; position: relative; }
.task > i:first-child { margin-right: 0; }
.task .ex { margin-left: 2px; }
.cur { background: #515151; }
.run::after { content: ""; position: absolute; left: 4px; right: 4px; bottom: 0; height: 2px; background: #76b9ed; }
.cur.run::after { left: 0; right: 0; }
.tray { margin-left: auto; display: flex; align-items: center; padding-right: 20px; border-right: 1px solid #6b6b6b; margin-right: 4px; gap: 10px; }
.shield { margin-right: -1px; }
.wifi { margin-right: -2px; }
.eng { letter-spacing: -.4px; margin-right: 3px; }
.clock { width: 56px; text-align: center; line-height: 18px; letter-spacing: -.55px; white-space: nowrap; margin: 0 6px 0 -2px; }
```
